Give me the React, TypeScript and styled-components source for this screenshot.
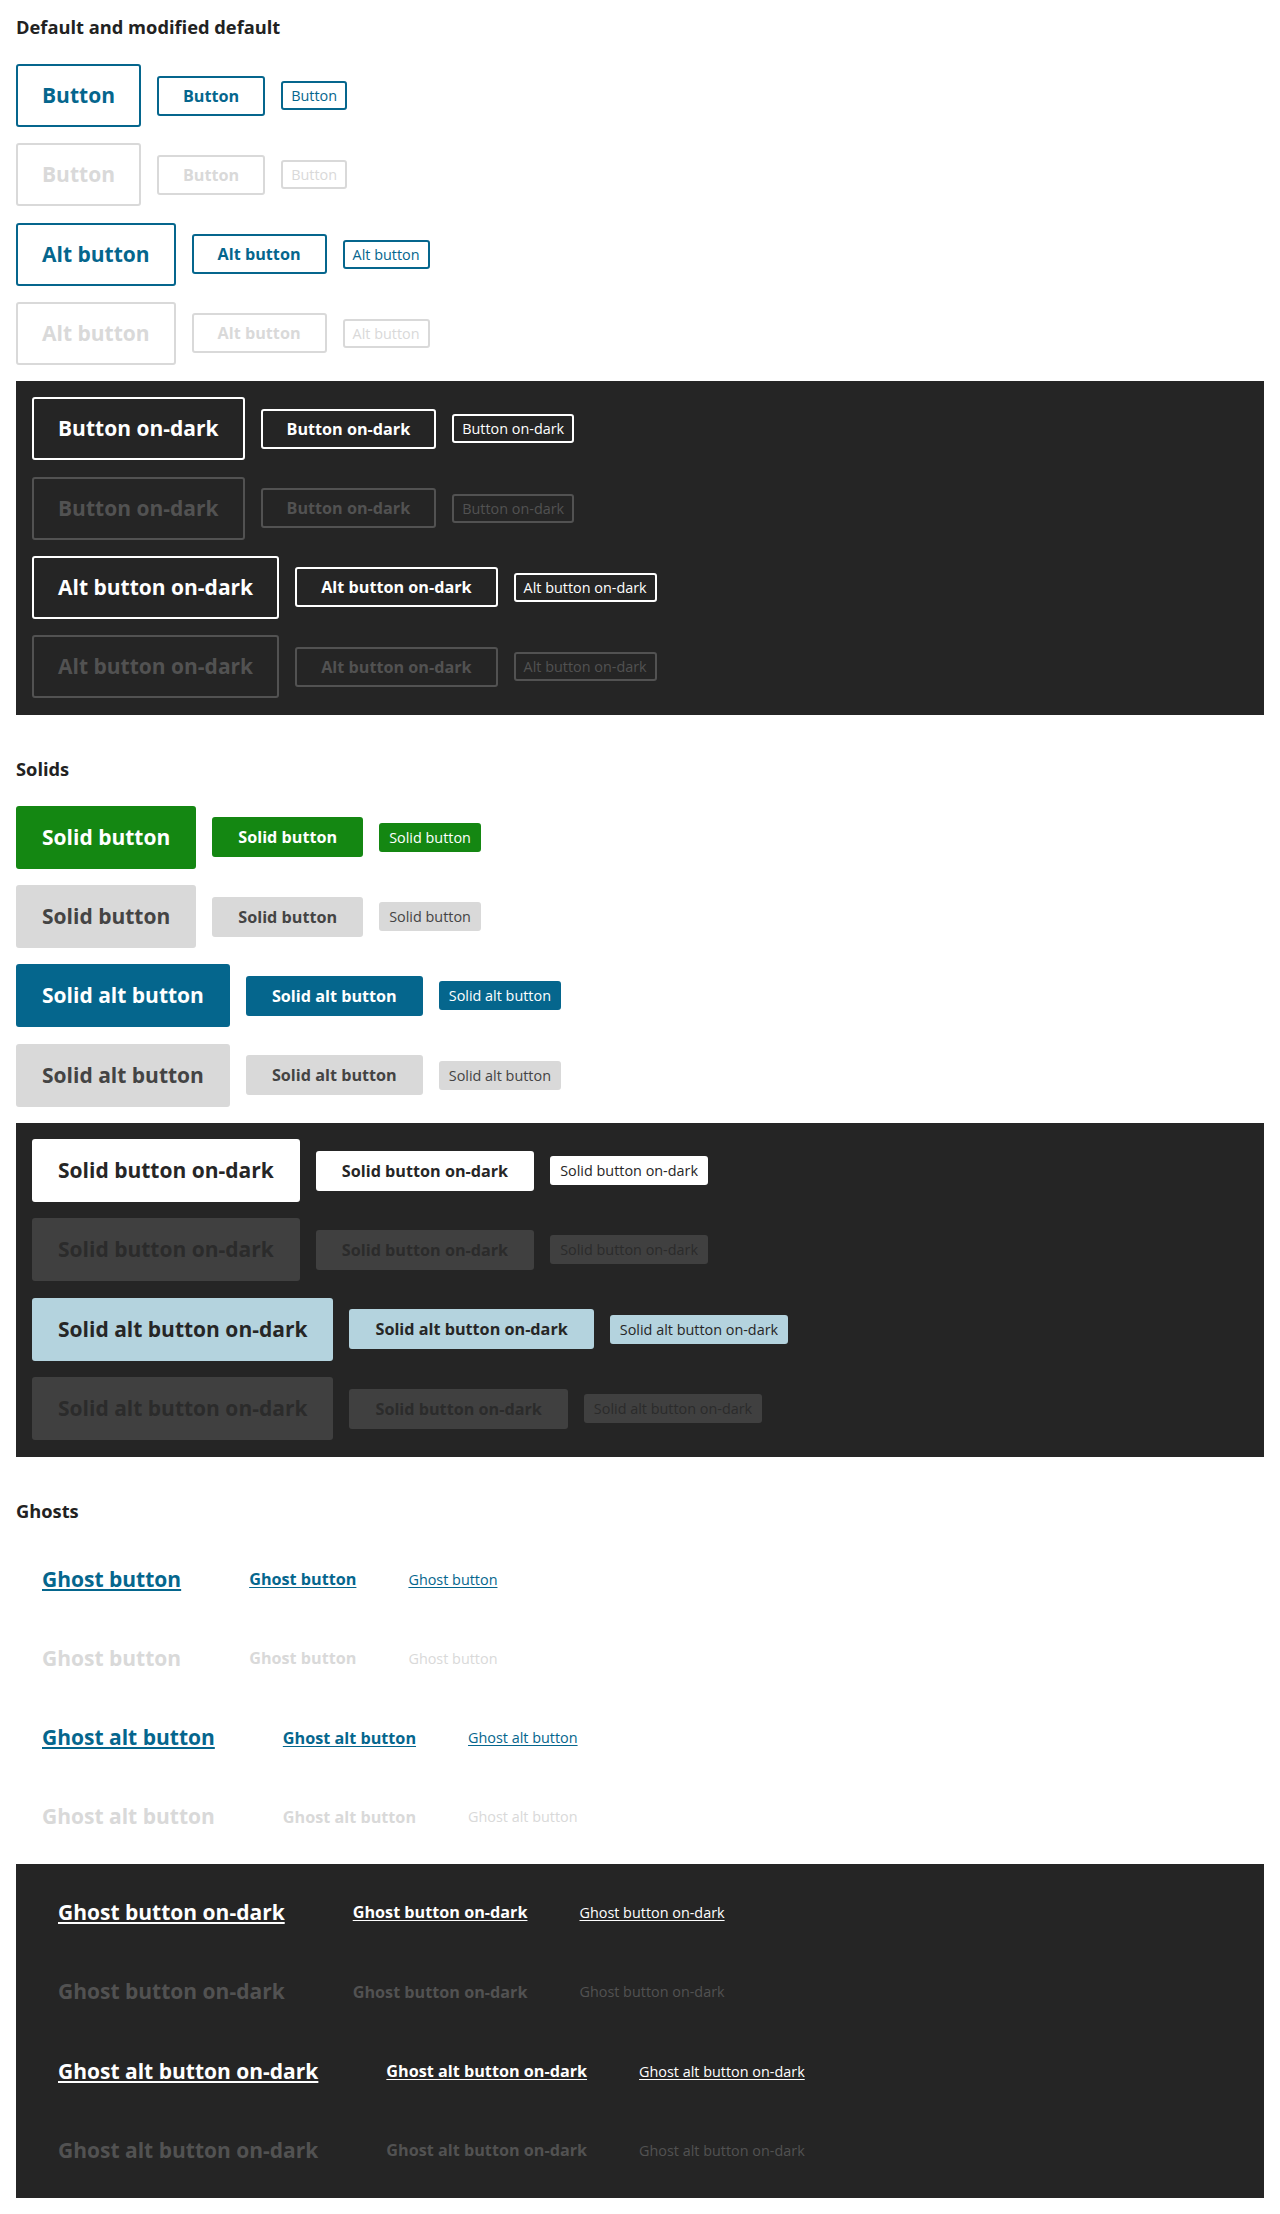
import React from 'react'
import styled, { createGlobalStyle, css } from 'styled-components'

type Kind = 'outline' | 'solid' | 'solidAlt' | 'ghost'
type Size = 'lg' | 'md' | 'sm'

type RowSpec = {
	kind: Kind
	labels: string[]
	disabled?: boolean
}

type SectionSpec = {
	title: string
	light: RowSpec[]
	dark: RowSpec[]
}

const BLUE = '#05668d'
const GREEN = '#148712'
const LIGHT_OFF = '#d9d9d9'
const DARK_BG = '#252525'
const DARK_OFF = '#525252'

const three = (label: string): string[] => [label, label, label]

const SECTIONS: SectionSpec[] = [
	{
		title: 'Default and modified default',
		light: [
			{ kind: 'outline', labels: three('Button') },
			{ kind: 'outline', labels: three('Button'), disabled: true },
			{ kind: 'outline', labels: three('Alt button') },
			{ kind: 'outline', labels: three('Alt button'), disabled: true }
		],
		dark: [
			{ kind: 'outline', labels: three('Button on-dark') },
			{ kind: 'outline', labels: three('Button on-dark'), disabled: true },
			{ kind: 'outline', labels: three('Alt button on-dark') },
			{ kind: 'outline', labels: three('Alt button on-dark'), disabled: true }
		]
	},
	{
		title: 'Solids',
		light: [
			{ kind: 'solid', labels: three('Solid button') },
			{ kind: 'solid', labels: three('Solid button'), disabled: true },
			{ kind: 'solidAlt', labels: three('Solid alt button') },
			{ kind: 'solidAlt', labels: three('Solid alt button'), disabled: true }
		],
		dark: [
			{ kind: 'solid', labels: three('Solid button on-dark') },
			{ kind: 'solid', labels: three('Solid button on-dark'), disabled: true },
			{ kind: 'solidAlt', labels: three('Solid alt button on-dark') },
			{
				kind: 'solidAlt',
				labels: ['Solid alt button on-dark', 'Solid button on-dark', 'Solid alt button on-dark'],
				disabled: true
			}
		]
	},
	{
		title: 'Ghosts',
		light: [
			{ kind: 'ghost', labels: three('Ghost button') },
			{ kind: 'ghost', labels: three('Ghost button'), disabled: true },
			{ kind: 'ghost', labels: three('Ghost alt button') },
			{ kind: 'ghost', labels: three('Ghost alt button'), disabled: true }
		],
		dark: [
			{ kind: 'ghost', labels: three('Ghost button on-dark') },
			{ kind: 'ghost', labels: three('Ghost button on-dark'), disabled: true },
			{ kind: 'ghost', labels: three('Ghost alt button on-dark') },
			{ kind: 'ghost', labels: three('Ghost alt button on-dark'), disabled: true }
		]
	}
]

const SIZES: Size[] = ['lg', 'md', 'sm']

type Palette = { bg: string; border: string; color: string; underline: boolean }

const palette = (kind: Kind, dark: boolean, off: boolean): Palette => {
	if (kind === 'ghost') {
		const color = off ? (dark ? DARK_OFF : LIGHT_OFF) : dark ? '#ffffff' : BLUE
		return { bg: 'transparent', border: 'transparent', color, underline: !off }
	}
	if (kind === 'outline') {
		const c = off ? (dark ? DARK_OFF : LIGHT_OFF) : dark ? '#ffffff' : BLUE
		return { bg: 'transparent', border: c, color: c, underline: false }
	}
	if (off) {
		return dark
			? { bg: '#404040', border: '#404040', color: '#2b2b2b', underline: false }
			: { bg: LIGHT_OFF, border: LIGHT_OFF, color: '#444444', underline: false }
	}
	if (dark) {
		const bg = kind === 'solid' ? '#ffffff' : '#b4d3de'
		return { bg, border: bg, color: '#262626', underline: false }
	}
	const bg = kind === 'solid' ? GREEN : BLUE
	return { bg, border: bg, color: '#ffffff', underline: false }
}

const sizeStyles = {
	lg: css`
		font-size: 21px;
		font-weight: 700;
		line-height: 31px;
		padding: 14px 24px;
	`,
	md: css`
		font-size: 16.2px;
		font-weight: 700;
		line-height: 24px;
		padding: 6px 24px;
	`,
	sm: css`
		font-size: 14.4px;
		font-weight: 400;
		line-height: 21px;
		padding: 2px 8px;
	`
}

const GlobalStyle = createGlobalStyle`
	html, body {
		margin: 0;
		padding: 0;
		background: #ffffff;
	}
	body {
		font-family: 'Open Sans', 'Noto Sans', 'Liberation Sans', sans-serif;
		color: #222222;
	}
`

const Page = styled.main`
	padding: 14px 16px 16px 16px;
`

const Section = styled.section`
	& + & {
		margin-top: 41px;
	}
`

const Heading = styled.h3`
	margin: 0 0 24px 0;
	font-size: 18.3px;
	line-height: 26px;
	font-weight: 700;
	color: #222222;
`

const Stack = styled.div`
	display: flex;
	flex-direction: column;
	gap: 16.3px;
`

const DarkPanel = styled(Stack)`
	margin-top: 16px;
	padding: 16.5px 16px;
	background: ${DARK_BG};
`

const Row = styled.div`
	display: flex;
	align-items: center;
	gap: 16px;
`

const Btn = styled.button<{ $size: Size; $pal: Palette }>`
	font-family: inherit;
	margin: 0;
	border: 2px solid ${(p) => p.$pal.border};
	border-radius: 3px;
	background: ${(p) => p.$pal.bg};
	color: ${(p) => p.$pal.color};
	text-decoration: ${(p) => (p.$pal.underline ? 'underline' : 'none')};
	text-underline-offset: 2px;
	white-space: nowrap;
	cursor: pointer;
	${(p) => sizeStyles[p.$size]}
	&:disabled {
		cursor: default;
	}
`

const ButtonRow = ({ row, dark }: { row: RowSpec; dark: boolean }): JSX.Element => {
	const pal = palette(row.kind, dark, Boolean(row.disabled))
	return (
		<Row>
			{SIZES.map((size, i) => (
				<Btn key={size} $size={size} $pal={pal} disabled={row.disabled}>
					{row.labels[i]}
				</Btn>
			))}
		</Row>
	)
}

export default function App(): JSX.Element {
	return (
		<Page>
			<GlobalStyle />
			{SECTIONS.map((section) => (
				<Section key={section.title}>
					<Heading>{section.title}</Heading>
					<Stack>
						{section.light.map((row, i) => (
							<ButtonRow key={i} row={row} dark={false} />
						))}
					</Stack>
					<DarkPanel>
						{section.dark.map((row, i) => (
							<ButtonRow key={i} row={row} dark />
						))}
					</DarkPanel>
				</Section>
			))}
		</Page>
	)
}
